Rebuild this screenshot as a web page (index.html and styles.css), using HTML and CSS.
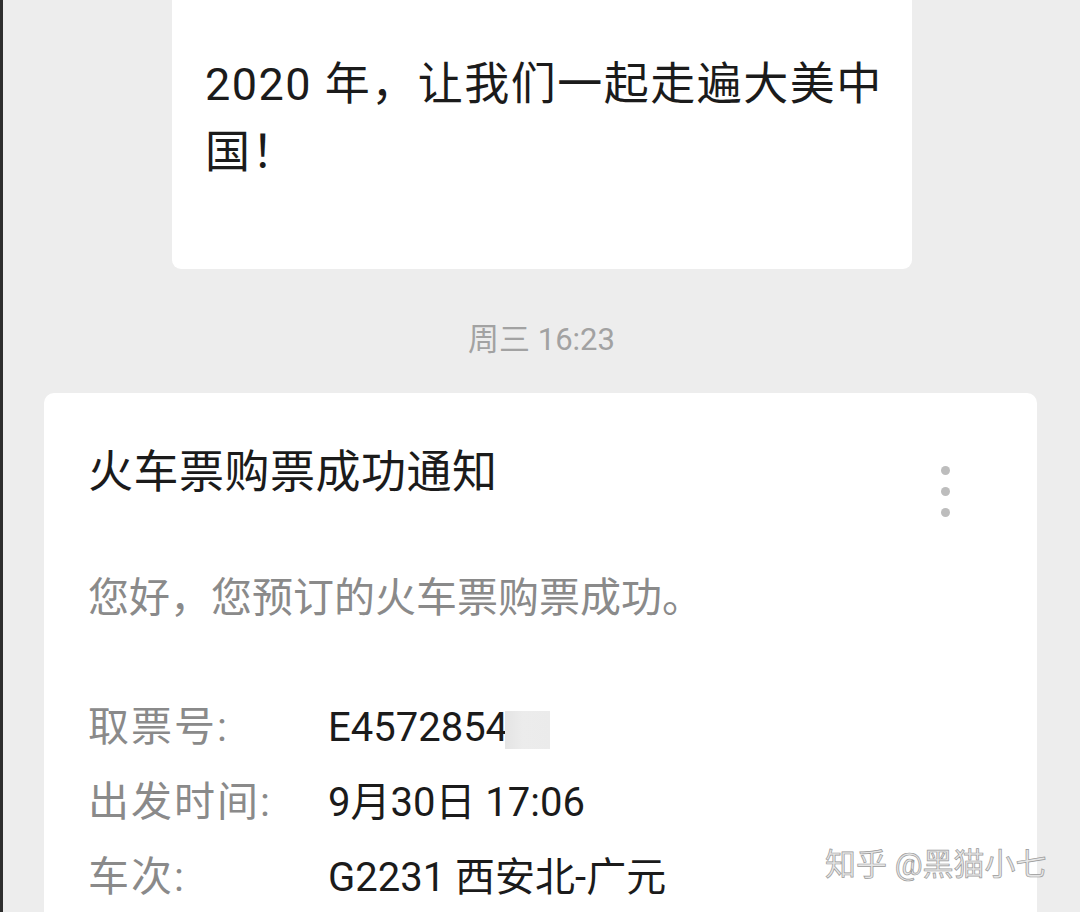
FILE: index.html
```html
<!DOCTYPE html>
<html>
<head>
  <meta charset="utf-8" />
  <title>服务通知</title>
  <meta name="viewport" content="width=device-width, initial-scale=1">
  <link rel="stylesheet" href="styles.css">
</head>
<body>
  <div class="chat column">
    <div class="bubble">2020 年，让我们一起走遍大美中<br>国！</div>
    <div class="time">周三 16:23</div>
    <div class="card">
      <div class="card-head">
        <div class="title">火车票购票成功通知</div>
        <div class="more column">
          <span class="dot"></span>
          <span class="dot"></span>
          <span class="dot"></span>
        </div>
      </div>
      <div class="greeting">您好，您预订的火车票购票成功。</div>
      <div class="rows">
        <div class="row">
          <span class="label">取票号:</span>
          <span class="value">E4572854<span class="smudge"></span></span>
        </div>
        <div class="row">
          <span class="label">出发时间:</span>
          <span class="value">9月30日 17:06</span>
        </div>
        <div class="row">
          <span class="label">车次:</span>
          <span class="value">G2231 西安北-广元</span>
        </div>
      </div>
    </div>
  </div>
  <div class="watermark">知乎 @黑猫小七</div>
</body>
</html>
```

FILE: styles.css
```css
html,
body {
  padding: 0;
  margin: 0;
  height: 100%;
  width: 100%;
  overflow: hidden;
}

* {
  box-sizing: border-box;
}

body {
  background: #ededed;
  border-left: 3px solid #2e2e2e;
  font-family: Roboto, "Noto Sans CJK SC", sans-serif;
  color: #1b1b1b;
  position: relative;
}

.column {
  display: flex;
  flex-direction: column;
}

.bubble {
  margin-left: 169px;
  width: 740px;
  background: #fff;
  border-radius: 0 0 9px 9px;
  padding: 51px 10px 82px 33px;
  font-size: 45px;
  line-height: 68px;
  letter-spacing: 1.5px;
  white-space: nowrap;
}

.time {
  margin-top: 51px;
  text-align: center;
  font-size: 31px;
  line-height: 40px;
  color: #a2a2a2;
}

.card {
  margin: 33px 0 0 41px;
  width: 993px;
  background: #fff;
  border-radius: 10px 10px 0 0;
  padding: 50px 44px 0;
}

.card-head {
  display: flex;
  justify-content: space-between;
  align-items: flex-start;
}

.title {
  font-size: 45px;
  line-height: 60px;
  letter-spacing: 0.5px;
}

.more {
  gap: 12px;
  margin: 23px 43px 0 0;
}

.dot {
  width: 9px;
  height: 9px;
  border-radius: 50%;
  background: #bdbdbd;
}

.greeting {
  margin-top: 53px;
  font-size: 41px;
  line-height: 56px;
  color: #8a8a8a;
}

.rows {
  margin-top: 64px;
}

.row {
  display: flex;
  font-size: 40px;
  line-height: 75px;
}

.label {
  width: 240px;
  color: #8a8a8a;
  font-size: 41px;
  letter-spacing: 2px;
}

.value {
  color: #1b1b1b;
}

.smudge {
  display: inline-block;
  width: 45px;
  height: 38px;
  margin-left: -3px;
  vertical-align: middle;
  background: linear-gradient(90deg, #e4e4e4, #ececec 40%, #ebebeb);
}

.watermark {
  position: absolute;
  left: 822px;
  top: 845px;
  font-size: 31px;
  line-height: 40px;
  color: #e6e6e6;
  -webkit-text-stroke: 0.7px #9a9a9a;
  white-space: nowrap;
}
```
